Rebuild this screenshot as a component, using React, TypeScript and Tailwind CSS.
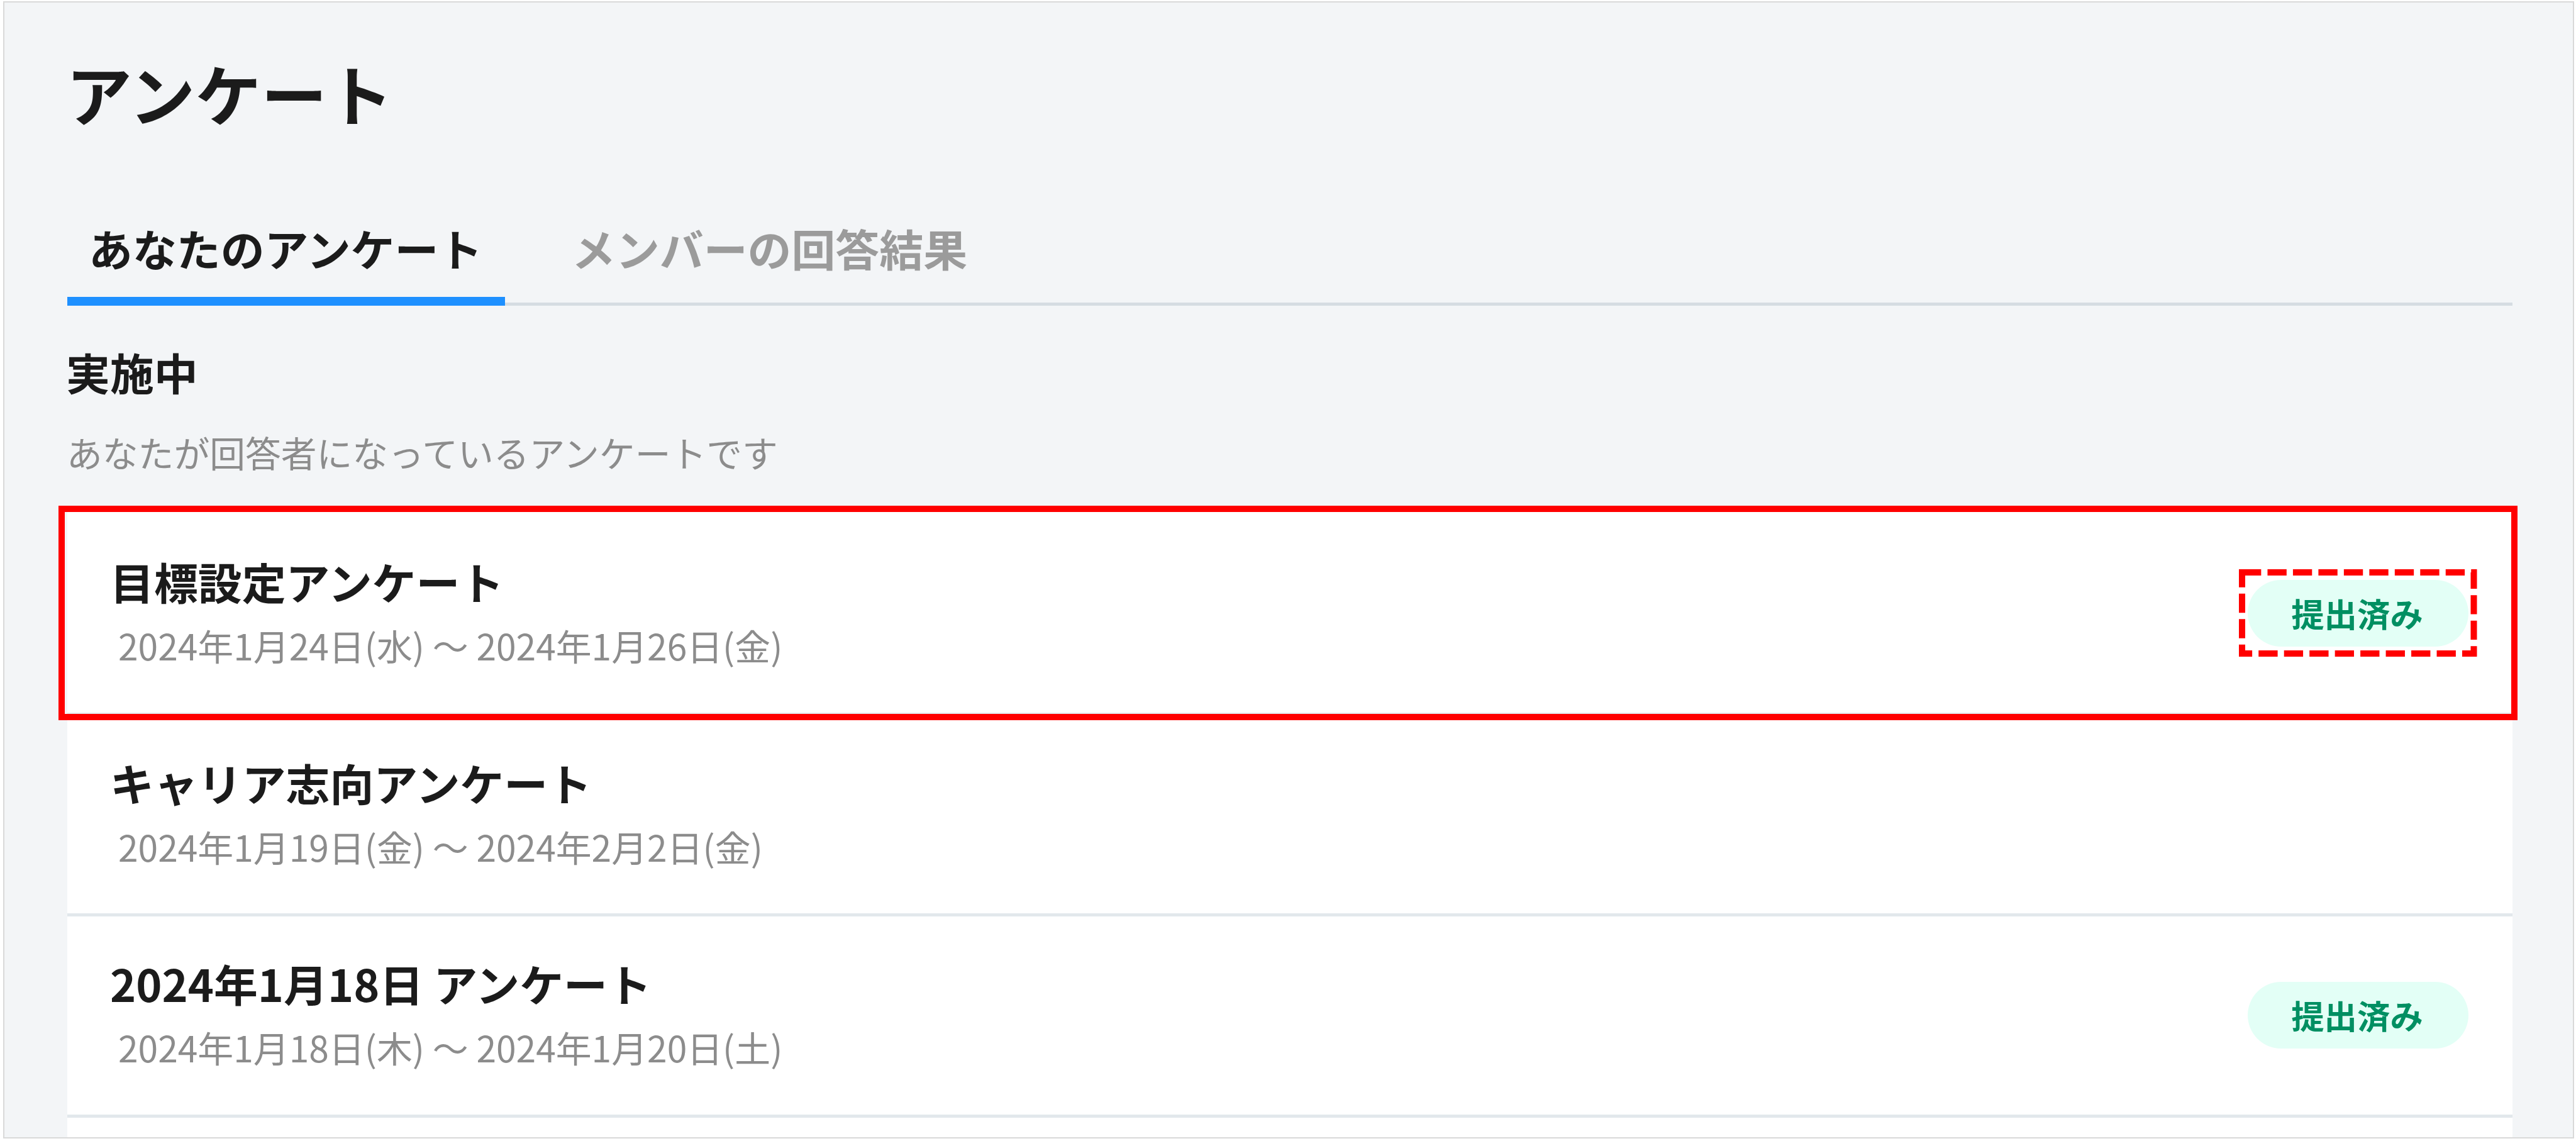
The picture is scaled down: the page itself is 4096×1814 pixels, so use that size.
type Survey = {
  title: string
  period: string
  submitted?: boolean
  highlighted?: boolean
}

const surveys: Survey[] = [
  {
    title: "目標設定アンケート",
    period: "2024年1月24日(水) ～ 2024年1月26日(金)",
    submitted: true,
    highlighted: true,
  },
  {
    title: "キャリア志向アンケート",
    period: "2024年1月19日(金) ～ 2024年2月2日(金)",
  },
  {
    title: "2024年1月18日 アンケート",
    period: "2024年1月18日(木) ～ 2024年1月20日(土)",
    submitted: true,
  },
]

function SubmittedBadge({ highlighted }: { highlighted?: boolean }) {
  return (
    <div className="relative flex h-[106px] w-[351px] items-center justify-center rounded-full bg-[#e3fff6] pr-[3px] pb-[3px]">
      <span className="text-[52.4px] leading-none font-bold text-[#008f62]">提出済み</span>
      {highlighted && (
        <svg
          className="absolute -top-[17px] -left-[14px]"
          width="379"
          height="139"
          viewBox="0 0 379 139"
          fill="none"
        >
          <rect
            x="5"
            y="5"
            width="368.5"
            height="129"
            stroke="#ff0000"
            strokeWidth="10"
            strokeDasharray="30.35 10.12"
          />
        </svg>
      )}
    </div>
  )
}

function SurveyRow({ survey }: { survey: Survey }) {
  return (
    <li className="relative flex h-[319.5px] items-center justify-between border-b-5 border-[#e2e8ec] pr-[70px] pl-[68px]">
      <div className="self-start pt-[54px]">
        <h3 className="text-[69.9px] leading-[104px] font-bold text-[#1b1b1b]">{survey.title}</h3>
        <p className="mt-[7px] pl-[13px] text-[56.9px] leading-[85px] text-[#8c8c8c]">{survey.period}</p>
      </div>
      {survey.submitted && <SubmittedBadge highlighted={survey.highlighted} />}
      {/* Highlight frame around the whole row */}
      {survey.highlighted && (
        <div className="absolute -top-[14px] -right-[8px] -left-[14px] h-[341px] border-[10px] border-[#ff0000]" />
      )}
    </li>
  )
}

export default function App() {
  return (
    <div
      lang="ja"
      className="h-[1814px] w-[4096px] bg-white pt-[2px] pl-[5px] font-['Noto_Sans_CJK_JP',sans-serif]"
    >
      <div className="h-[1808px] w-[4088px] overflow-hidden border-2 border-[#d9d9d9] bg-[#f3f5f7] pr-[96px] pl-[100px]">
        <h1 className="-ml-[2px] pt-[64px] text-[104.8px] leading-[156px] font-bold text-[#1b1b1b]">アンケート</h1>

        {/* Tabs */}
        <div className="mt-[116px] flex h-[146px] gap-[73px] border-b-5 border-[#d5dce2] text-[69.9px] leading-[108px] font-bold">
          <div className="h-[146px] w-[696px] border-b-[14px] border-[#1e90ff] pl-[34px] text-[#1b1b1b]">
            あなたのアンケート
          </div>
          <div className="pl-[33px] text-[#9b9b9b]">メンバーの回答結果</div>
        </div>

        {/* Running surveys */}
        <section>
          <h2 className="mt-[53px] -ml-[2px] text-[69.9px] leading-[104px] font-bold text-[#1b1b1b]">実施中</h2>
          <p className="mt-[33px] -ml-[1px] text-[56.8px] leading-[85px] text-[#8c8c8c]">
            あなたが回答者になっているアンケートです
          </p>
          <ul className="mt-[53px] h-[1000px] bg-white pt-[4px]">
            {surveys.map((survey) => (
              <SurveyRow key={survey.title} survey={survey} />
            ))}
          </ul>
        </section>
      </div>
    </div>
  )
}
